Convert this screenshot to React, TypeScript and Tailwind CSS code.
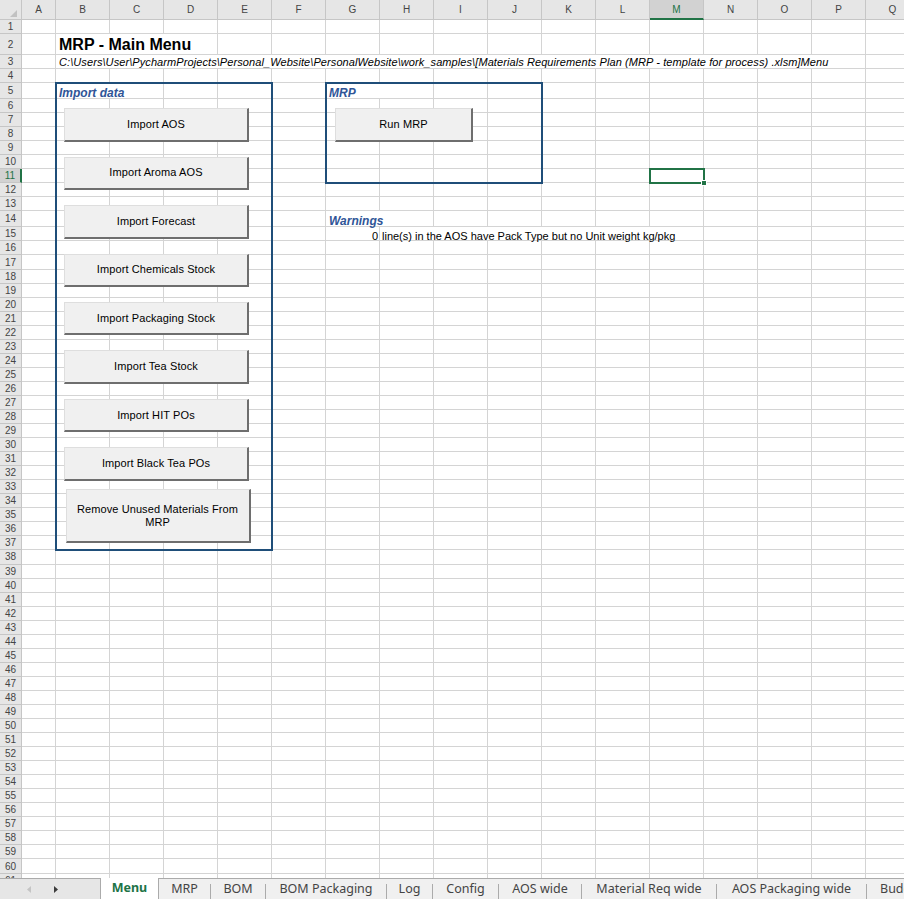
import React from 'react';

const COLUMNS = ['A', 'B', 'C', 'D', 'E', 'F', 'G', 'H', 'I', 'J', 'K', 'L', 'M', 'N', 'O', 'P', 'Q'];
const ROWS = Array.from({ length: 61 }, (_, i) => i + 1);
const ACTIVE_COL = 'M';
const ACTIVE_ROW = 11;

// same template for the cell grid and the overlay grid above it
const GRID =
  'grid grid-cols-[22px_34px_repeat(16,54px)] grid-rows-[20px_14px_21px_14px_14px_16px_repeat(8,14.05px)_16px_repeat(47,14.05px)]';

const IMPORT_BUTTONS = [
  'Import AOS',
  'Import Aroma AOS',
  'Import Forecast',
  'Import Chemicals Stock',
  'Import Packaging Stock',
  'Import Tea Stock',
  'Import HIT POs',
  'Import Black Tea POs',
];

const SHEET_TABS = [
  { name: 'MRP', width: 'w-[51px] justify-center' },
  { name: 'BOM', width: 'w-[54px] justify-center' },
  { name: 'BOM Packaging', width: 'w-[120px] justify-center' },
  { name: 'Log', width: 'w-[45px] justify-center' },
  { name: 'Config', width: 'w-[65px] justify-center' },
  { name: 'AOS wide', width: 'w-[82px] justify-center' },
  { name: 'Material Req wide', width: 'w-[134px] justify-center' },
  { name: 'AOS Packaging wide', width: 'w-[149px] justify-center' },
];

const ColHeader: React.FC<{ label: string }> = ({ label }) => {
  const active = label === ACTIVE_COL;
  return (
    <div
      className={
        active
          ? 'flex items-center justify-center bg-[#d2d2d2] border-r border-r-[#c6c6c6] border-b-2 border-b-[#217346] text-[#217346]'
          : 'flex items-center justify-center bg-[#e6e6e6] border-r border-b border-[#c6c6c6] text-[#444]'
      }
    >
      {label}
    </div>
  );
};

const RowHeader: React.FC<{ n: number }> = ({ n }) => {
  const active = n === ACTIVE_ROW;
  return (
    <div
      className={
        active
          ? 'flex items-center justify-center bg-[#d2d2d2] border-b border-b-[#c6c6c6] border-r-2 border-r-[#217346] text-[#217346]'
          : 'flex items-center justify-center bg-[#e6e6e6] border-r border-b border-[#c6c6c6] text-[#444]'
      }
    >
      {n}
    </div>
  );
};

const FormButton: React.FC<{ children: React.ReactNode; className: string }> = ({ children, className }) => (
  <div
    className={`flex items-center justify-center text-center px-2 bg-[#f0f0f0] border-t border-l border-t-[#dedede] border-l-[#dedede] border-r-2 border-b-2 border-r-[#6e6e6e] border-b-[#6e6e6e] text-[11px] leading-[13px] tracking-[0.1px] text-black ${className}`}
  >
    {children}
  </div>
);

const Worksheet: React.FC = () => (
  <div className="relative flex-1 min-h-0 overflow-hidden">
    <div className={`${GRID} w-max text-[10px]`}>
      <div className="flex items-end justify-end pr-[4px] pb-[2px] bg-[#e6e6e6] border-r border-b border-[#c6c6c6]">
        <svg width="7" height="7" viewBox="0 0 7 7">
          <polygon points="7,0 7,7 0,7" fill="#c2c2c2" />
        </svg>
      </div>
      {COLUMNS.map(c => (
        <ColHeader key={c} label={c} />
      ))}
      {ROWS.map(r => (
        <React.Fragment key={r}>
          <RowHeader n={r} />
          {COLUMNS.map(c => (
            <div key={c} className="bg-white border-r border-b border-[#d4d4d4]" />
          ))}
        </React.Fragment>
      ))}
    </div>

    <div className={`${GRID} absolute inset-0 w-max pointer-events-none text-black`}>
      {/* B2 */}
      <div className="col-start-3 col-end-6 row-start-3 mr-px mb-px bg-white flex items-end pl-[3px] whitespace-nowrap text-[16px] leading-[18px] font-bold">
        MRP - Main Menu
      </div>
      {/* B3 */}
      <div className="col-start-3 col-end-18 row-start-4 mr-px mb-px bg-white flex items-end pl-[3px] whitespace-nowrap text-[11px] leading-[12px] tracking-[0.085px] italic">
        C:\Users\User\PycharmProjects\Personal_Website\PersonalWebsite\work_samples\[Materials Requirements Plan (MRP - template for process) .xlsm]Menu
      </div>
      {/* B5 */}
      <div className="col-start-3 col-end-5 row-start-6 mr-px mb-px bg-white flex items-end pl-[3px] whitespace-nowrap text-[12px] leading-[10px] font-bold italic text-[#2f5597]">
        Import data
      </div>
      {/* G5 */}
      <div className="col-start-8 col-end-10 row-start-6 mr-px mb-px bg-white flex items-end pl-[3px] whitespace-nowrap text-[12px] leading-[10px] font-bold italic text-[#2f5597]">
        MRP
      </div>
      {/* G14 */}
      <div className="col-start-8 col-end-10 row-start-15 mr-px mb-px bg-white flex items-end pl-[3px] whitespace-nowrap text-[12px] leading-[9px] font-bold italic text-[#2f5597]">
        Warnings
      </div>
      {/* G15 */}
      <div className="col-start-8 row-start-16 mr-px mb-px flex items-end justify-end pr-px text-[11px] leading-[7px]">
        0
      </div>
      {/* H15 */}
      <div className="col-start-9 col-end-15 row-start-16 mr-px mb-px bg-white flex items-end pl-[2px] whitespace-nowrap text-[11px] leading-[7px]">
        line(s) in the AOS have Pack Type but no Unit weight kg/pkg
      </div>

      {/* B5:E37 border with the import buttons */}
      <div className="col-start-3 col-end-7 row-start-6 row-end-39 -m-px border-2 border-[#1f4e79] flex flex-col pt-[24.3px] pl-[7px] pointer-events-auto">
        <div className="flex flex-col gap-[14.93px]">
          {IMPORT_BUTTONS.map(label => (
            <FormButton key={label} className="w-[185px] h-[33.5px]">
              {label}
            </FormButton>
          ))}
        </div>
        <FormButton className="w-[185px] h-[53.5px] mt-[8.5px] ml-[1.5px]">Remove Unused Materials From MRP</FormButton>
      </div>

      {/* G5:J11 border with the run button */}
      <div className="col-start-8 col-end-12 row-start-6 row-end-13 -m-px border-2 border-[#1f4e79] flex flex-col pt-[24px] pl-[8px] pointer-events-auto">
        <FormButton className="w-[138px] h-[34px]">Run MRP</FormButton>
      </div>

      {/* selected cell M11 */}
      <div className="col-start-14 row-start-12 -m-px relative border-2 border-[#217346]">
        <div className="absolute -right-[4px] -bottom-[4px] w-[6px] h-[6px] bg-[#217346] border border-white" />
      </div>
    </div>
  </div>
);

const SheetTabs: React.FC = () => (
  <div className="h-[21px] shrink-0 flex overflow-hidden font-['Noto_Sans',sans-serif] text-[12.5px] leading-none">
    <div className="w-[100px] shrink-0 flex items-center bg-[#e6e6e6] border-t border-[#ababab]">
      <svg className="ml-[27px]" width="4" height="7" viewBox="0 0 4 7">
        <polygon points="4,0 4,7 0,3.5" fill="#c4c4c4" />
      </svg>
      <svg className="ml-[23px]" width="4" height="7" viewBox="0 0 4 7">
        <polygon points="0,0 0,7 4,3.5" fill="#3c3c3c" />
      </svg>
    </div>
    <div className="w-[59px] shrink-0 flex items-center justify-center bg-white border-x border-[#ababab] font-bold text-[#217346]">
      Menu
    </div>
    <div className="flex-1 min-w-0 flex bg-[#f0f0f0] border-t border-[#ababab] text-[#444]">
      {SHEET_TABS.map(tab => (
        <React.Fragment key={tab.name}>
          <div className={`${tab.width} shrink-0 flex items-center whitespace-nowrap`}>{tab.name}</div>
          <div className="w-px h-[15px] self-end shrink-0 bg-[#ababab]" />
        </React.Fragment>
      ))}
      <div className="shrink-0 flex items-center pl-[13px] whitespace-nowrap">Budget</div>
    </div>
  </div>
);

export default function App() {
  return (
    <div className="w-[904px] h-[899px] flex flex-col overflow-hidden bg-white font-['Liberation_Sans',Arial,sans-serif]">
      <Worksheet />
      <SheetTabs />
    </div>
  );
}
